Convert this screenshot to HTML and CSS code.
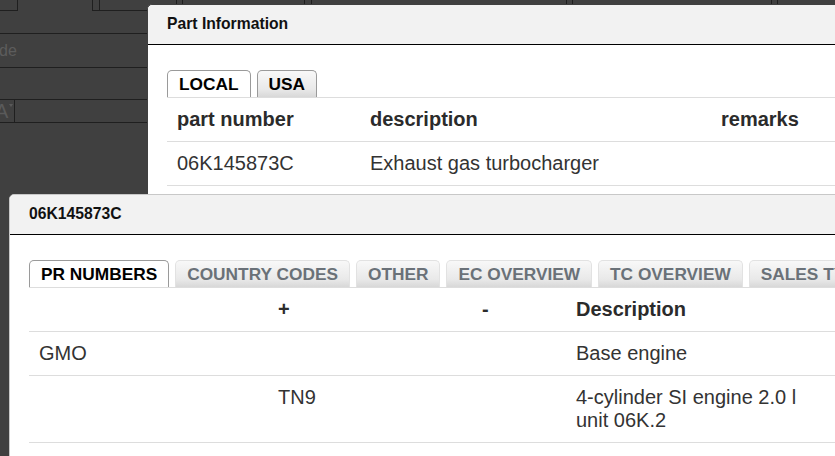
FILE: index.html
```html
<!DOCTYPE html>
<html lang="en">
<head>
  <meta charset="UTF-8">
  <meta name="viewport" content="width=device-width, initial-scale=1.0">
  <title>Part Information</title>
  <link rel="stylesheet" href="styles.css">
</head>
<body>
  <!-- search form behind the modal overlay -->
  <div class="backdrop">
    <div class="bg-strip">
      <span class="cell" style="width:18px"></span>
      <span class="cell gap" style="width:75px"></span>
      <span class="cell" style="width:7px"></span>
      <span class="cell" style="width:77px"></span>
      <span class="cell" style="width:6px"></span>
      <span class="cell" style="width:122px"></span>
      <span class="cell" style="width:7px"></span>
      <span class="cell" style="width:255px"></span>
      <span class="cell" style="width:6px"></span>
      <span class="cell" style="width:199px"></span>
      <span class="cell" style="width:6px"></span>
      <span class="cell fill"></span>
    </div>
    <div class="bg-row h23"></div>
    <div class="bg-row h34"><span class="bg-label">de</span></div>
    <div class="bg-row h32"></div>
    <div class="bg-row h23"><span class="bg-select">A<i class="caret"></i></span></div>
  </div>

  <div class="dialog dialog-part">
    <div class="dialog-head">Part Information</div>
    <div class="dialog-body">
      <div class="tabs">
        <span class="tab active">LOCAL</span>
        <span class="tab plain">USA</span>
      </div>
      <table class="grid">
        <tr>
          <th class="w193">part number</th>
          <th class="w351">description</th>
          <th>remarks</th>
        </tr>
        <tr>
          <td>06K145873C</td>
          <td>Exhaust gas turbocharger</td>
          <td></td>
        </tr>
        <tr>
          <td>&nbsp;</td>
          <td></td>
          <td></td>
        </tr>
      </table>
    </div>
  </div>

  <div class="dialog dialog-pr">
    <div class="dialog-head">06K145873C</div>
    <div class="dialog-body">
      <div class="tabs">
        <span class="tab active">PR NUMBERS</span>
        <span class="tab">COUNTRY CODES</span>
        <span class="tab">OTHER</span>
        <span class="tab">EC OVERVIEW</span>
        <span class="tab">TC OVERVIEW</span>
        <span class="tab">SALES TYPES</span>
      </div>
      <table class="grid fixed">
        <tr>
          <th class="w239"></th>
          <th class="w204">+</th>
          <th class="w94">-</th>
          <th class="w270">Description</th>
          <th></th>
        </tr>
        <tr>
          <td>GMO</td>
          <td></td>
          <td></td>
          <td>Base engine</td>
          <td></td>
        </tr>
        <tr>
          <td></td>
          <td>TN9</td>
          <td></td>
          <td>4-cylinder SI engine 2.0 l unit 06K.2</td>
          <td></td>
        </tr>
      </table>
    </div>
  </div>
</body>
</html>
```

FILE: styles.css
```css
body {
  margin: 0;
  width: 835px;
  height: 456px;
  overflow: hidden;
  position: relative;
  background: #404040;
  font-family: "Liberation Sans", Arial, sans-serif;
}

/* dimmed page */
.backdrop {
  display: flex;
  flex-direction: column;
}
.bg-strip {
  display: flex;
  height: 11px;
}
.cell {
  box-sizing: border-box;
  height: 11px;
  border-right: 1px solid #1f1f1f;
  border-bottom: 1px solid #1f1f1f;
}
.cell.gap {
  border-bottom: none;
}
.cell.fill {
  flex: 1;
  border-right: none;
}
.bg-row {
  box-sizing: border-box;
  border-bottom: 1px solid #1f1f1f;
  display: flex;
  align-items: center;
}
.h23 { height: 23px; }
.h32 { height: 32px; }
.h34 { height: 34px; }
.bg-label {
  font-size: 16px;
  color: #5c5c5c;
  margin-left: -1px;
}
.bg-select {
  box-sizing: border-box;
  height: 100%;
  width: 15px;
  border-right: 1px solid #1f1f1f;
  font-size: 20px;
  color: #5a5a5a;
  position: relative;
  line-height: 23px;
  text-indent: -5px;
}
.caret {
  position: absolute;
  left: 9px;
  top: 4px;
  border-left: 2px solid transparent;
  border-right: 2px solid transparent;
  border-top: 3px solid #5a5a5a;
}

/* modal windows */
.dialog {
  position: absolute;
  width: 900px;
  height: 600px;
  background: #fff;
  border: 1px solid #c8c8c8;
  border-radius: 5px 5px 0 0;
}
.dialog-part {
  left: 147px;
  top: 4px;
  border-color: #404040;
}
.dialog-pr {
  left: 9px;
  top: 194px;
}
.dialog-head {
  height: 39px;
  line-height: 37px;
  padding: 0 19px;
  background: #f2f2f2;
  border-bottom: 1px solid #000;
  border-radius: 5px 5px 0 0;
  font-size: 15.7px;
  font-weight: bold;
  color: #111;
}
.dialog-body {
  padding: 25px 19px 0;
}

.tabs {
  display: flex;
  gap: 6px;
  height: 27px;
}
.tab {
  height: 26px;
  line-height: 27px;
  padding: 0 11px;
  border: 1px solid #e2e2e2;
  border-bottom: none;
  border-radius: 5px 5px 0 0;
  background: linear-gradient(#f8f8f8, #e9e9e9 70%, #d8d8d8);
  font-size: 17.3px;
  font-weight: bold;
  color: #6a7178;
  white-space: nowrap;
}
.tab.plain {
  border-color: #9a9a9a;
  color: #000;
}
.tab.active {
  background: #fff;
  border-color: #9a9a9a;
  color: #000;
}

.grid {
  width: 100%;
  border-collapse: collapse;
  border-top: 1px solid #dddddd;
  font-size: 20px;
  color: #333;
}
.grid.fixed {
  table-layout: fixed;
}
.grid th,
.grid td {
  box-sizing: border-box;
  padding: 10px;
  line-height: 23px;
  text-align: left;
  vertical-align: top;
  border-bottom: 1px solid #dddddd;
}
.grid th {
  font-weight: bold;
  color: #2b2b2b;
}
.w193 { width: 193px; }
.w351 { width: 351px; }
.w239 { width: 239px; }
.w204 { width: 204px; }
.w94 { width: 94px; }
.w270 { width: 270px; }
```
